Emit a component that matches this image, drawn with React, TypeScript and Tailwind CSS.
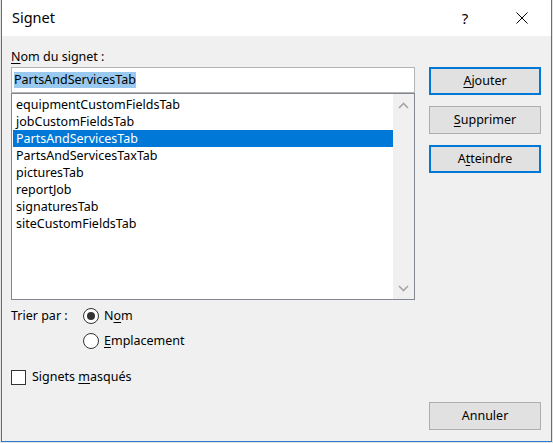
import { useState } from "react";

const bookmarks = [
  "equipmentCustomFieldsTab",
  "jobCustomFieldsTab",
  "PartsAndServicesTab",
  "PartsAndServicesTaxTab",
  "picturesTab",
  "reportJob",
  "signaturesTab",
  "siteCustomFieldsTab",
];

function Key({ children }: { children: string }) {
  return <span className="underline decoration-1 underline-offset-[2px]">{children}</span>;
}

function Chevron({ up }: { up?: boolean }) {
  return (
    <svg width="11" height="7" viewBox="0 0 11 7">
      <polyline
        points={up ? "1,6 5.5,1.5 10,6" : "1,1 5.5,5.5 10,1"}
        fill="none"
        stroke="#a6a6a6"
        strokeWidth="1.6"
      />
    </svg>
  );
}

function Radio({ checked, onClick, children }: { checked: boolean; onClick: () => void; children: React.ReactNode }) {
  return (
    <div className="flex h-[20px] items-center cursor-default" onClick={onClick}>
      <div className="flex h-[16px] w-[16px] items-center justify-center rounded-full border border-[#333333] bg-white">
        {checked && <div className="h-[8px] w-[8px] rounded-full bg-[#333333]" />}
      </div>
      <span className="ml-[5px]">{children}</span>
    </div>
  );
}

export default function App() {
  const [selected, setSelected] = useState("PartsAndServicesTab");
  const [sortBy, setSortBy] = useState<"nom" | "emplacement">("nom");
  const [hidden, setHidden] = useState(false);

  return (
    <div className="h-[443px] w-[553px] overflow-hidden bg-[#e4e4e4] font-['Noto_Sans',sans-serif] text-[12.5px] text-black">
      <div className="ml-[1px] flex h-[442px] w-[551px] flex-col border-x border-b border-[#2b79d0]">
        {/* title bar */}
        <div className="flex h-[36px] shrink-0 items-center bg-white">
          <span className="pl-[10px] text-[14.5px]">Signet</span>
          <div className="ml-auto flex h-full w-[46px] items-center justify-center text-[15px]">?</div>
          <div className="ml-[11px] mr-[6px] flex h-full w-[46px] items-center justify-center">
            <svg width="12" height="12" viewBox="0 0 12 12">
              <path d="M0.5 0.5 L11.5 11.5 M11.5 0.5 L0.5 11.5" stroke="#000" strokeWidth="1" />
            </svg>
          </div>
        </div>

        {/* body */}
        <div className="flex flex-1 gap-[14px] bg-[#f0f0f0] pl-[9px] pr-[10px] pb-[11px]">
          <div className="flex w-[404px] flex-col pt-[12px]">
            <div className="h-[17px] leading-[17px]">
              <Key>N</Key>om du signet :
            </div>
            <div className="mt-[2px] flex h-[26px] items-center border border-[#b4b4b4] bg-white pl-[2px]">
              <span className="bg-[#99c9ef] leading-[16px]">{selected}</span>
            </div>
            <div className="flex h-[207px] border border-[#828790] bg-white">
              <div className="flex-1 pl-[1px] pt-[2px]">
                {bookmarks.map((b) => (
                  <div
                    key={b}
                    onClick={() => setSelected(b)}
                    className={
                      b === selected
                        ? "h-[17px] bg-[#0078d7] pl-[3px] leading-[17px] text-white"
                        : "h-[17px] pl-[3px] leading-[17px]"
                    }
                  >
                    {b}
                  </div>
                ))}
              </div>
              <div className="flex w-[21px] flex-col justify-between bg-[#f0f0f0]">
                <div className="flex h-[21px] items-center justify-center pt-[1px]">
                  <Chevron up />
                </div>
                <div className="flex h-[21px] items-center justify-center">
                  <Chevron />
                </div>
              </div>
            </div>

            <div className="mt-[6px] flex">
              <div className="flex h-[20px] w-[72px] items-center">Trier par :</div>
              <div className="flex flex-col gap-[5px]">
                <Radio checked={sortBy === "nom"} onClick={() => setSortBy("nom")}>
                  N<Key>o</Key>m
                </Radio>
                <Radio checked={sortBy === "emplacement"} onClick={() => setSortBy("emplacement")}>
                  <Key>E</Key>mplacement
                </Radio>
              </div>
            </div>

            <div className="mt-[16px] flex h-[20px] items-center cursor-default" onClick={() => setHidden(!hidden)}>
              <div className="flex h-[15px] w-[15px] items-center justify-center border border-[#333333] bg-white">
                {hidden && <span className="text-[11px] leading-none">✓</span>}
              </div>
              <span className="ml-[6px]">
                Signets <Key>m</Key>asqués
              </span>
            </div>
          </div>

          <div className="flex w-[112px] flex-col gap-[11px] pt-[31px]">
            <button className="h-[28px] border-2 border-[#0078d7] bg-[#e1e1e1]">
              <Key>A</Key>jouter
            </button>
            <button className="h-[28px] border border-[#adadad] bg-[#e1e1e1]">
              <Key>S</Key>upprimer
            </button>
            <button className="h-[28px] border-2 border-[#0078d7] bg-[#e1e1e1]">
              A<Key>t</Key>teindre
            </button>
            <button className="mt-auto h-[28px] border border-[#adadad] bg-[#e1e1e1]">Annuler</button>
          </div>
        </div>
      </div>
    </div>
  );
}
